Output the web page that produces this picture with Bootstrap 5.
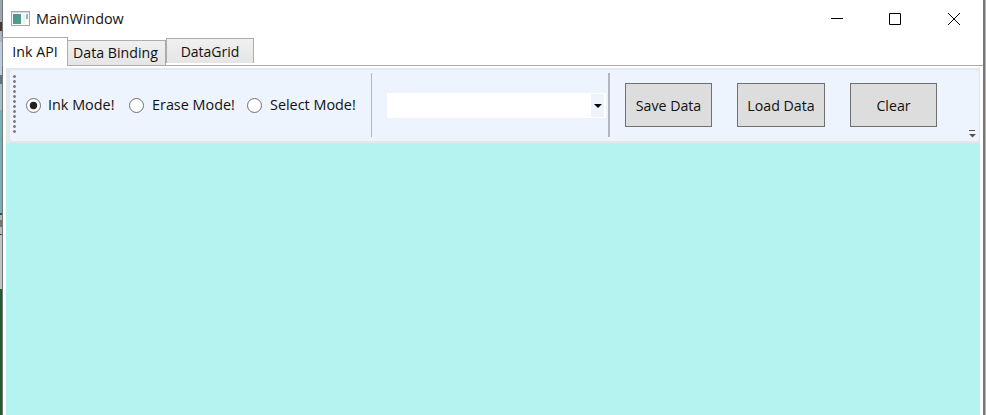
<!DOCTYPE html>
<html lang="en">
<head>
<meta charset="utf-8">
<title>MainWindow</title>
<link href="https://cdn.jsdelivr.net/npm/bootstrap@5.3.0/dist/css/bootstrap.min.css" rel="stylesheet">
<style>
body{width:986px;height:415px;font:14px/20px "Open Sans","Noto Sans",sans-serif;color:#111;background:#fff}
svg{display:block;flex:none}
.edge-left{width:3px;background:linear-gradient(90deg,transparent 2px,#70777b 2px),linear-gradient(#9aa6b0 0 22px,#57352f 22px 31px,#a9b3bd 31px 42px,#b9cbe0 42px 75px,#64737b 75px 84px,#a4bfc6 84px 110px,#78b0b6 110px 213px,#334d5b 213px 215px,#b5b5b5 215px 220px,#777 220px 227px,#bbb 227px 234px,#334d5b 234px 235px,#c3c3c3 235px 289px,#245b2e 289px)}
.edge-right{width:3px;background:linear-gradient(90deg,transparent 2px,#b4b4b4 2px),#777}
.titlebar{height:37px;padding-left:8px}
.caption-text{margin-left:6px;font-size:14.4px}
.win-buttons{margin-left:auto;padding-right:23px;gap:46px}
.tabs{height:29px;margin-left:-1px;background:linear-gradient(#acacac,#acacac) 65px 28px/100% 1px no-repeat}
.tab-item{border:1px solid #acacac;background:linear-gradient(#f0f0f0,#e5e5e5);text-align:center;white-space:nowrap}
.tab-a{width:66px;height:29px;background:#fff;border-bottom:0;border-left-color:#888;padding-top:4px;font-size:14.2px}
.tab-b{width:98px;height:26px;margin-top:3px;border-left:0;padding:2px 2px 0 0;font-size:14.2px}
.tab-c{width:88px;height:25px;margin-top:1px;border-bottom:0;padding-top:3px}
.pane{padding:2px 3px 0 3px}
.tray{height:75px;background:#e4e8eb;padding:2px 1px 2px 4px}
.tools{background:#eef4fd;border-radius:4px;padding-left:3px;position:relative}
.grip{width:3px;height:60px;margin-top:5px;background:radial-gradient(circle at 1.5px 1.5px,#808080 1.1px,transparent 1.7px) 0 0/3px 5px}
.opt{height:20px;margin-top:25px;white-space:nowrap;font-size:14.4px}
.opt svg{margin-right:7px}
.opt-ink{width:103px;margin-left:10px}
.opt-erase{width:118px}
.opt-select{width:124px}
.opt-erase svg,.opt-select svg{margin-right:8px}
.rule{height:64px;margin-top:3px;background:#b2b6bf}
.rule-thin{width:1px}
.rule-wide{width:2px;margin-left:2px}
.combo{width:219px;height:25px;margin:23px 0 0 15px;background:#fff;padding:1px 2px 1px 0}
.combo-arrow{width:13px;background:#eef4fd}
.cmds{margin-left:15px;gap:25px}
.cmd{width:87px;height:44px;margin-top:13px;padding:1px 0 0;border:1px solid #707070;border-radius:0;background:#ddd;color:#111;font-size:14.2px;line-height:20px}
.cmd:nth-child(2){width:88px}
.overflow-mark{position:absolute;right:3px;bottom:3px}
.ink{background:#b5f3f0}
</style>
<script src="https://cdn.jsdelivr.net/npm/bootstrap@5.3.0/dist/js/bootstrap.bundle.min.js"></script>
</head>
<body class="d-flex overflow-hidden m-0">
<div class="edge-left flex-shrink-0"></div>
<main class="d-flex flex-column flex-grow-1">
<header class="titlebar d-flex align-items-center">
<svg width="19" height="15" viewBox="0 0 19 15"><defs><linearGradient id="g" x2="1" y2="1"><stop stop-color="#4c8fa8"/><stop offset="1" stop-color="#4fa675"/></linearGradient></defs><rect x=".5" y=".5" width="18" height="14" fill="#fafafa" stroke="#a3a8ac"/><path d="M1 1.5h17" stroke="#d5dade"/><path d="M2 3h8v10H2z" fill="url(#g)"/><path d="M12 3h2v10h-2z" fill="#eef0f2"/><path d="M15 3h2v5h-2z" fill="#8fbcb9"/></svg>
<span class="caption-text">MainWindow</span>
<div class="win-buttons d-flex align-items-center">
<svg width="12" height="12" stroke="#000" fill="none"><path d="M0 5.5h12"/></svg>
<svg width="13" height="12" stroke="#000" fill="none"><path d="M.5.5h11v11H.5z"/></svg>
<svg width="12" height="12" stroke="#000" fill="none"><path d="M0 0l12 12M12 0L0 12"/></svg>
</div>
</header>
<nav class="tabs d-flex align-items-start">
<div class="tab-item tab-a">Ink API</div>
<div class="tab-item tab-b">Data Binding</div>
<div class="tab-item tab-c">DataGrid</div>
</nav>
<section class="pane d-flex flex-column flex-grow-1">
<div class="tray">
<div class="tools d-flex align-items-start h-100">
<div class="grip"></div>
<label class="opt opt-ink d-flex align-items-center"><svg width="15" height="15"><circle cx="7.5" cy="7.5" r="7" fill="#fff" stroke="#707070"/><circle cx="7.5" cy="7.5" r="3.7" fill="#212121"/></svg><span>Ink Mode!</span></label>
<label class="opt opt-erase d-flex align-items-center"><svg width="15" height="15"><circle cx="7.5" cy="7.5" r="7" fill="#fff" stroke="#707070"/></svg><span>Erase Mode!</span></label>
<label class="opt opt-select d-flex align-items-center"><svg width="15" height="15"><circle cx="7.5" cy="7.5" r="7" fill="#fff" stroke="#707070"/></svg><span>Select Mode!</span></label>
<div class="rule rule-thin"></div>
<div class="combo d-flex justify-content-end"><div class="combo-arrow d-flex align-items-center justify-content-center"><svg width="8" height="4"><path d="M0 0h8L4 4z"/></svg></div></div>
<div class="rule rule-wide"></div>
<div class="cmds d-flex">
<button class="cmd btn">Save Data</button>
<button class="cmd btn">Load Data</button>
<button class="cmd btn">Clear</button>
</div>
<svg class="overflow-mark" width="7" height="8"><path d="M0 .5h6" stroke="#555"/><path d="M0 4h7L3.5 7.5z" fill="#555"/></svg>
</div>
</div>
<div class="ink flex-grow-1"></div>
</section>
</main>
<div class="edge-right flex-shrink-0"></div>
</body>
</html>
